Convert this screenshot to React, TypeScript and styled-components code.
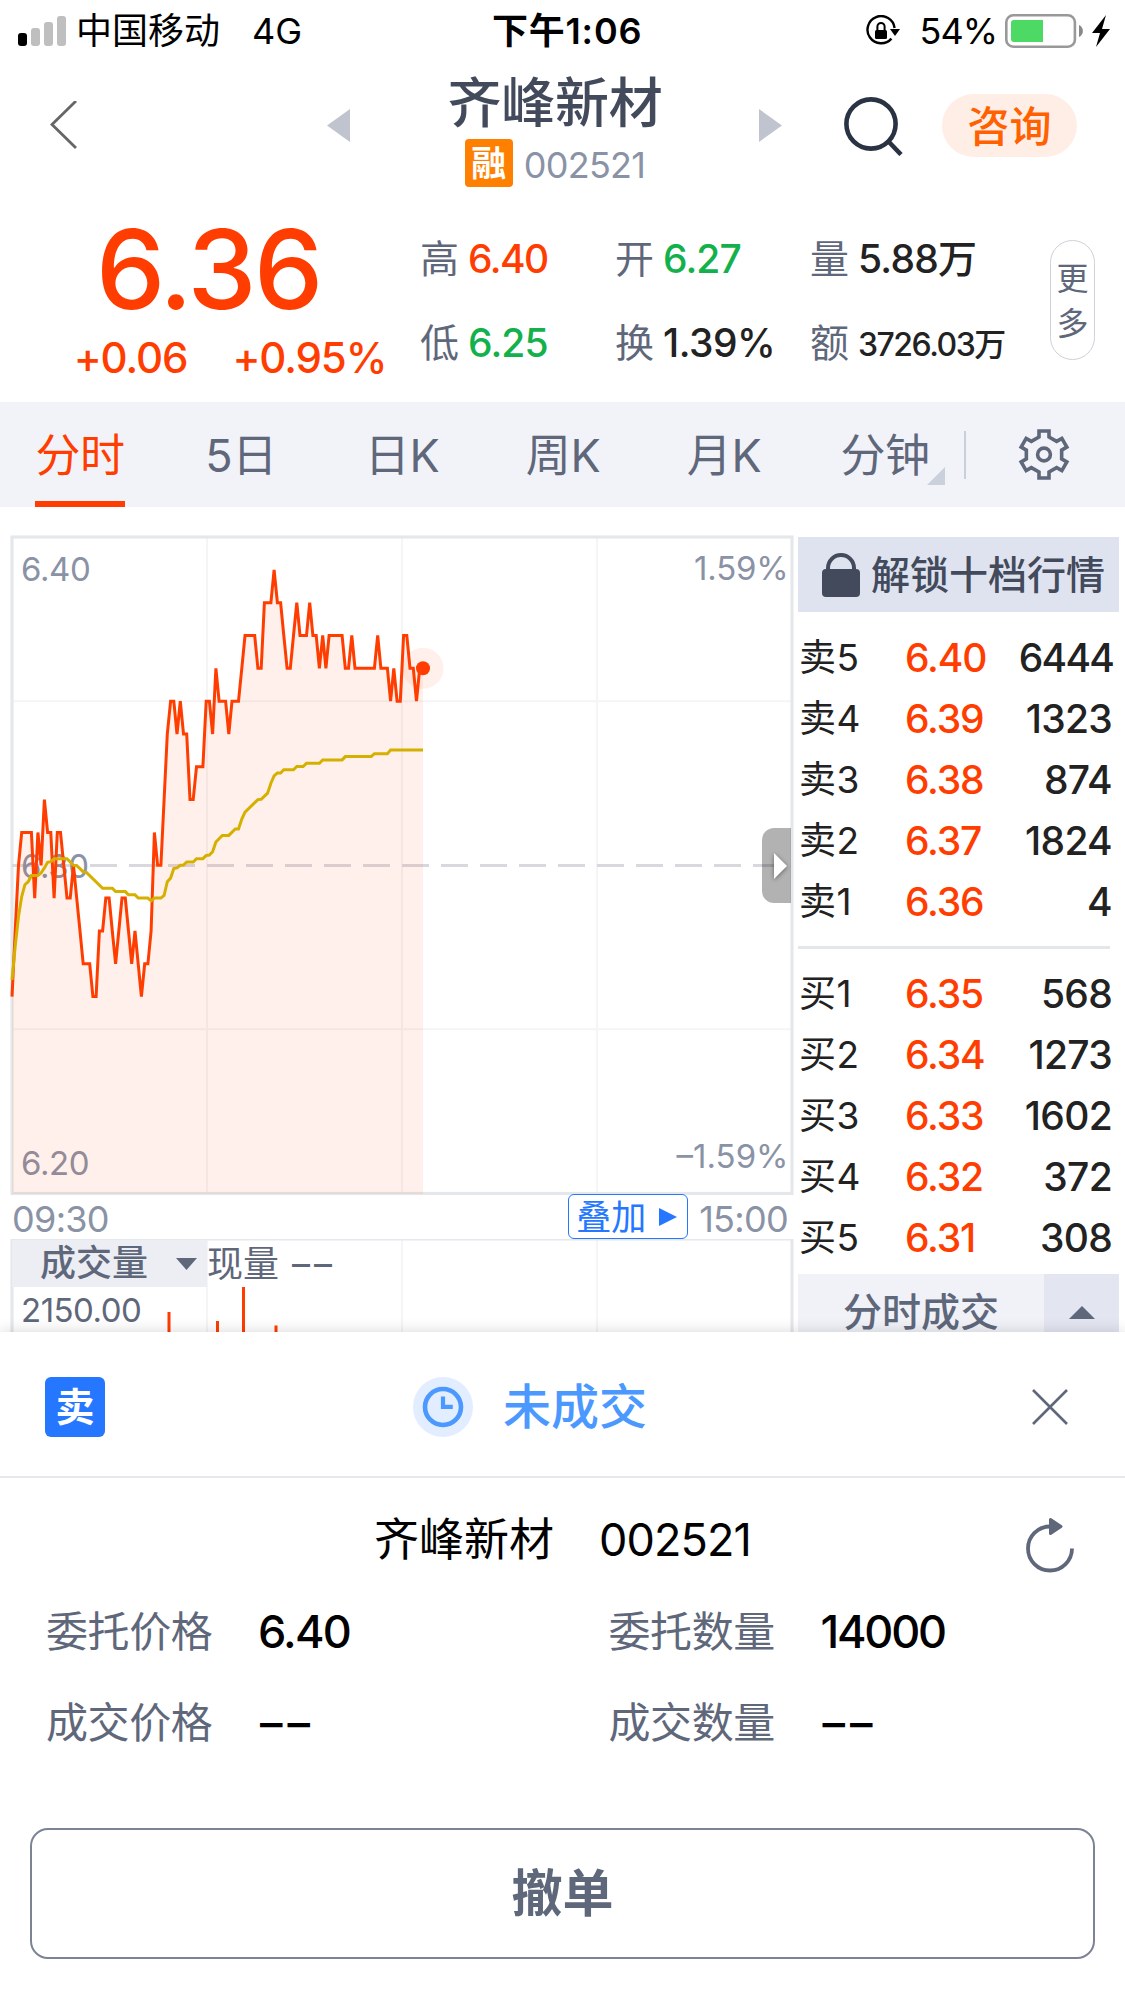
import React from 'react';
import styled, { createGlobalStyle } from 'styled-components';

const RED = '#ff3d00';
const GREEN = '#12b14c';
const SLATE = '#5f677b';
const MIST = '#8a92a5';
const INK = '#222222';

const GlobalStyle = createGlobalStyle`
  * { box-sizing: border-box; }
  body { margin: 0; background: #fff; }
`;

const Screen = styled.div`
  width: 1125px;
  height: 2001px;
  overflow: hidden;
  display: flex;
  flex-direction: column;
  background: #fff;
  font-family: Inter, "Noto Sans CJK SC", sans-serif;
  color: ${INK};
  white-space: nowrap;
`;

/* ---------- status bar ---------- */

const StatusBar = styled.header`
  height: 60px;
  padding: 2px 14px 0 18px;
  display: grid;
  grid-template-columns: 476px 1fr auto;
  align-items: center;
  font-size: 36px;
  line-height: 58px;
  color: #000;
`;

const StatusGroup = styled.div`
  display: flex;
  align-items: center;
`;

const Carrier = styled.span`
  margin-left: 10px;
`;

const Network = styled.span`
  margin-left: 32px;
`;

const Clock = styled.span`
  font-weight: 600;
  margin-left: -2px;
  letter-spacing: 0.8px;
`;

const BatteryText = styled.span`
  margin: 0 8px 0 20px;
  letter-spacing: -1px;
`;

/* ---------- navigation ---------- */

const Nav = styled.nav`
  height: 131px;
  display: flex;
  align-items: center;
  padding: 0 48px;
`;

const NavLeft = styled.div`
  width: 399px;
  display: flex;
  align-items: center;
  gap: 249px;
`;

const TitleBlock = styled.div`
  width: 216px;
  margin-top: 7px;
  display: flex;
  flex-direction: column;
  align-items: center;
`;

const StockTitle = styled.h1`
  margin: 0;
  font-size: 54px;
  line-height: 68px;
  font-weight: 500;
  letter-spacing: -0.3px;
  color: #424a5c;
`;

const CodeLine = styled.div`
  display: flex;
  align-items: center;
  gap: 11px;
  font-size: 36px;
  line-height: 48px;
  letter-spacing: -0.7px;
  color: ${MIST};
`;

const CodeText = styled.span`
  padding-top: 3px;
`;

const MarginBadge = styled.span`
  width: 48px;
  height: 48px;
  border-radius: 4px;
  background: #ff8000;
  color: #fff;
  font-size: 35px;
  font-weight: 700;
  letter-spacing: 0;
  text-align: center;
`;

const NavRight = styled.div`
  flex: 1;
  display: flex;
  align-items: center;
  padding-left: 96px;
`;

const SearchSlot = styled.span`
  display: flex;
  margin-left: 62px;
`;

const ConsultButton = styled.button`
  margin: 0 0 0 38px;
  width: 135px;
  height: 63px;
  padding: 0;
  border: 0;
  border-radius: 32px;
  background: #ffeee6;
  color: #ff6000;
  font: inherit;
  font-size: 42px;
  line-height: 65px;
  font-weight: 500;
`;

/* ---------- quote summary ---------- */

const Quote = styled.section`
  height: 211px;
  display: flex;
`;

const PriceBlock = styled.div`
  width: 420px;
  color: ${RED};
  font-weight: 500;
  display: flex;
  flex-direction: column;
  align-items: center;
`;

const LastPrice = styled.div`
  margin: 19px 3px 0 0;
  font-size: 110px;
  line-height: 119px;
  letter-spacing: -2.4px;
`;

const ChangeLine = styled.div`
  display: flex;
  gap: 45px;
  padding-left: 40px;
  font-size: 42px;
  line-height: 57px;
  letter-spacing: -1.1px;
`;

const StatsGrid = styled.div`
  flex: 1;
  padding-top: 25px;
  display: grid;
  grid-template: 84px 84px / 195px 195px 1fr;
`;

const Stat = styled.div`
  display: flex;
  align-items: center;
  gap: 8px;
  font-size: 39px;
  line-height: 85px;
  color: ${SLATE};
`;

const StatValue = styled.span<{ $tone?: string; $small?: boolean; $track?: number }>`
  font-weight: 500;
  color: ${(p) => p.$tone ?? INK};
  font-size: ${(p) => (p.$small ? 32 : 39)}px;
  letter-spacing: ${(p) => p.$track ?? -1.3}px;
  padding-top: ${(p) => (p.$small ? 5 : 0)}px;
  padding-left: 1px;
`;

const MoreButton = styled.button`
  width: 45px;
  height: 120px;
  margin: 49px 30px 0 0;
  padding: 2px 0 0;
  border: 1.5px solid #cfd1d8;
  border-radius: 23px;
  background: #fff;
  display: flex;
  flex-direction: column;
  align-items: center;
  justify-content: center;
  font: inherit;
  font-size: 32px;
  line-height: 45px;
  color: ${SLATE};
`;

/* ---------- period tabs ---------- */

const Tabs = styled.div`
  height: 105px;
  display: flex;
  background: #f2f3f8;
`;

const Tab = styled.div`
  position: relative;
  width: 161px;
  padding-right: 1px;
  display: flex;
  justify-content: center;
  font-size: 45px;
  line-height: 108px;
`;

const TabLabel = styled.span<{ $active?: boolean }>`
  height: 105px;
  letter-spacing: -0.4px;
  color: ${(p) => (p.$active ? RED : SLATE)};
  border-bottom: 6px solid ${(p) => (p.$active ? RED : 'transparent')};
`;

const TabCorner = styled.i`
  position: absolute;
  right: 21px;
  bottom: 22px;
  width: 18px;
  height: 18px;
  background: #cbd1db;
  clip-path: polygon(100% 0, 100% 100%, 0 100%);
`;

const SettingsCell = styled.div`
  flex: 1;
  display: flex;
  align-items: center;
`;

const CellDivider = styled.i`
  width: 2px;
  height: 48px;
  margin: 0 51px 0 -2px;
  background: #c9d0da;
`;

/* ---------- market area ---------- */

const Market = styled.main`
  height: 825px;
  display: flex;
  overflow: hidden;
`;

const ChartColumn = styled.div`
  width: 798px;
  padding-top: 23px;
`;

const ChartBox = styled.div`
  position: relative;
  height: 664px;
`;

const ChartSvg = styled.svg`
  display: block;
  overflow: visible;
`;

const Drawer = styled.div`
  position: absolute;
  top: 298px;
  left: 762px;
  width: 29px;
  height: 75px;
  border-radius: 12px 0 0 12px;
  background: rgba(0, 0, 0, 0.3);
  display: flex;
  align-items: center;
  justify-content: flex-end;
  padding-right: 4px;

  svg {
    overflow: visible;
    filter: drop-shadow(0 1px 2px rgba(0, 0, 0, 0.45));
  }
`;

const AxisRow = styled.div`
  position: relative;
  height: 45px;
  padding: 0 10px 0 12px;
  display: flex;
  align-items: center;
  font-size: 36px;
  line-height: 50px;
  letter-spacing: -0.7px;
  color: ${MIST};
`;

const AxisTime = styled.span`
  padding-top: 4px;
`;

const OverlayButton = styled.button`
  width: 120px;
  height: 45px;
  margin: 0 11px 0 auto;
  padding: 0 10px 0 7px;
  display: flex;
  align-items: center;
  justify-content: space-between;
  border: 1.5px solid #2577ff;
  border-radius: 6px;
  background: #fff;
  color: #2577ff;
  font: inherit;
  font-size: 35px;
  line-height: 40px;
  letter-spacing: 0;
`;

const VolumeBox = styled.div`
  position: relative;
  height: 93px;
`;

const VolumeSvg = styled.svg`
  position: absolute;
  left: 0;
  top: 0;
`;

const VolumeHead = styled.div`
  position: relative;
  display: flex;
  padding: 1px 0 0 12px;
  font-size: 36px;
  line-height: 49px;
  height: 48px;
  color: ${SLATE};
`;

const VolumePicker = styled.div`
  width: 195px;
  height: 47px;
  padding: 0 10px 0 28px;
  display: flex;
  align-items: center;
  justify-content: space-between;
  background: #edeef4;
  font-weight: 500;
`;

const Dashes = styled.span`
  letter-spacing: 4px;
  margin-left: 13px;
`;

const VolumeMax = styled.div`
  position: relative;
  padding-left: 21px;
  font-size: 33px;
  line-height: 47px;
  height: 45px;
  letter-spacing: -0.5px;
  color: ${SLATE};
`;

/* ---------- order book ---------- */

const Book = styled.aside`
  width: 321px;
  padding-top: 30px;
  display: flex;
  flex-direction: column;
`;

const UnlockBar = styled.div`
  height: 75px;
  display: flex;
  align-items: center;
  padding-left: 24px;
  gap: 11px;
  background: #dfe3ef;
  color: #424a5c;
  font-size: 39px;
  line-height: 75px;
  font-weight: 500;
`;

const Levels = styled.div`
  padding-top: 14px;
`;

const Level = styled.div`
  height: 61px;
  padding: 0 6px 0 1px;
  display: grid;
  grid-template-columns: 106px 90px 1fr;
  align-items: center;
  font-size: 39px;
  line-height: 62px;
`;

const LevelName = styled.span`
  font-size: 37px;
  line-height: 63px;
  letter-spacing: 0.4px;
`;

const LevelPrice = styled.span`
  font-weight: 500;
  letter-spacing: -1.2px;
  color: ${RED};
`;

const LevelVolume = styled.span<{ $tight?: boolean }>`
  font-weight: 500;
  letter-spacing: ${(p) => (p.$tight ? -1.8 : -0.7)}px;
  margin-right: ${(p) => (p.$tight ? 0 : 1)}px;
  text-align: right;
`;

const BookRule = styled.hr`
  width: 312px;
  height: 3px;
  margin: 15px 0 -1px;
  border: 0;
  background: #e3e7ec;
  flex-shrink: 0;
`;

const DealsBar = styled.div`
  height: 58px;
  margin-top: 7px;
  display: grid;
  grid-template-columns: 246px 75px;
  background: #f1f2f7;
  color: ${SLATE};
  font-size: 39px;
  line-height: 40px;
  font-weight: 500;
`;

const DealsLabel = styled.div`
  padding-top: 18px;
  text-align: center;
`;

const DealsToggle = styled.div`
  display: flex;
  justify-content: center;
  padding-top: 32px;
  background: #e3e5f1;
`;

/* ---------- order sheet ---------- */

const Sheet = styled.section`
  position: relative;
  height: 669px;
  background: #fff;
  box-shadow: 0 0 14px rgba(0, 0, 0, 0.16);
`;

const SheetHead = styled.div`
  height: 146px;
  padding: 6px 57px 0 45px;
  display: flex;
  align-items: center;
  border-bottom: 2px solid #e5e8ec;
`;

const SideBadge = styled.span`
  width: 60px;
  height: 60px;
  border-radius: 6px;
  background: #2577ff;
  color: #fff;
  font-size: 39px;
  line-height: 59px;
  font-weight: 700;
  text-align: center;
`;

const OrderState = styled.div`
  margin: 0 auto 0 308px;
  display: flex;
  align-items: center;
  gap: 30px;
  color: #4b98ff;
  font-size: 48px;
  line-height: 62px;
  font-weight: 500;
`;

const SheetTitle = styled.div`
  height: 108px;
  padding: 14px 51px 0;
  display: grid;
  grid-template-columns: 1fr auto 1fr;
  align-items: start;
  color: #000;
  font-size: 45px;
  line-height: 96px;
`;

const TitlePair = styled.div`
  display: flex;
  gap: 45px;
`;

const SheetCode = styled.span`
  letter-spacing: -0.9px;
`;

const RefreshSlot = styled.div`
  justify-self: end;
  padding-top: 25px;
  line-height: 0;
`;

const Fields = styled.div`
  display: grid;
  grid-template-columns: 1fr 1fr;
  grid-auto-rows: 91px;
`;

const Field = styled.div`
  display: flex;
  align-items: center;
  padding-left: 46px;
  font-size: 42px;
  line-height: 92px;
  color: ${SLATE};
`;

const FieldName = styled.span`
  width: 168px;
  letter-spacing: -0.4px;
`;

const FieldValue = styled.span<{ $track?: number; $indent?: number }>`
  margin-left: ${(p) => p.$indent ?? 44}px;
  font-size: 45px;
  font-weight: 500;
  letter-spacing: ${(p) => p.$track ?? -1.8}px;
  color: #000;
`;

const CancelButton = styled.button`
  display: block;
  width: 1065px;
  height: 131px;
  margin: 60px 30px 0;
  padding: 0;
  border: 2px solid #7c8395;
  border-radius: 18px;
  background: #fff;
  color: ${SLATE};
  font: inherit;
  font-size: 51px;
  line-height: 127px;
  font-weight: 700;
`;

/* ---------- icons ---------- */

const SignalIcon = () => (
  <svg width="48" height="30" viewBox="0 0 48 30">
    <rect x="0" y="17" width="9" height="13" rx="3" fill="#000" />
    <rect x="13" y="12" width="9" height="18" rx="3" fill="#bfbfbf" />
    <rect x="26" y="6" width="9" height="24" rx="3" fill="#bfbfbf" />
    <rect x="39" y="0" width="9" height="30" rx="3" fill="#bfbfbf" />
  </svg>
);

const RotationLockIcon = () => (
  <svg width="34" height="32" viewBox="0 0 34 32">
    <path d="M25.4 23.6 A13.6 13.6 0 1 1 28.6 13" fill="none" stroke="#000" strokeWidth="2.4" />
    <path d="M24 14h10l-5 7z" />
    <rect x="9" y="15" width="12" height="9" rx="1.5" />
    <path d="M11.4 16v-4.5a3.6 3.6 0 0 1 7.2 0V16" fill="none" stroke="#000" strokeWidth="2" />
  </svg>
);

const BatteryIcon = () => (
  <svg width="106" height="34" viewBox="0 0 106 34">
    <rect x="1.3" y="1.3" width="68.6" height="31.4" rx="7" fill="none" stroke="#999" strokeWidth="2.6" />
    <path d="M9 6h29v22H9a3 3 0 0 1-3-3V9a3 3 0 0 1 3-3z" fill="#4cd964" />
    <path d="M74 11a6.6 6.6 0 0 1 0 12z" fill="#888" />
    <path d="M101 1 87 19h8l-4 14 14-18h-8z" fill="#000" />
  </svg>
);

const BackIcon = () => (
  <svg width="30" height="50" viewBox="0 0 30 50">
    <path d="M28 0 4 23.5 28 47" fill="none" stroke="#666" strokeWidth="2.8" />
  </svg>
);

const Triangle = ({ w, h, dir, color }: { w: number; h: number; dir: 'l' | 'r' | 'u' | 'd'; color: string }) => {
  const points = {
    l: `${w},0 ${w},${h} 0,${h / 2}`,
    r: `0,0 ${w},${h / 2} 0,${h}`,
    u: `0,${h} ${w / 2},0 ${w},${h}`,
    d: `0,0 ${w},0 ${w / 2},${h}`,
  }[dir];
  return (
    <svg width={w} height={h} viewBox={`0 0 ${w} ${h}`}>
      <polygon points={points} fill={color} />
    </svg>
  );
};

const SearchIcon = () => (
  <svg width="60" height="60" viewBox="0 0 60 60">
    <circle cx="27" cy="28" r="24.6" fill="none" stroke="#2a3344" strokeWidth="4.6" />
    <path d="m44 45 13 13.5" stroke="#2a3344" strokeWidth="4.6" />
  </svg>
);

const gearOutline = Array.from({ length: 6 }, (_, k) => {
  const a = (k * Math.PI) / 3;
  return [[-5, -17.5], [-5, -23.5], [5, -23.5], [5, -17.5]]
    .map(([x, y]) => `${(27 + x * Math.cos(a) - y * Math.sin(a)).toFixed(2)},${(26.5 + x * Math.sin(a) + y * Math.cos(a)).toFixed(2)}`)
    .join(' ');
}).join(' ');

const GearIcon = () => (
  <svg width="54" height="54" viewBox="0 0 54 54" fill="none" stroke={SLATE} strokeWidth="3.6">
    <polygon points={gearOutline} />
    <circle cx="27" cy="26.5" r="6.4" />
  </svg>
);

const LockIcon = () => (
  <svg width="38" height="46" viewBox="0 0 38 46">
    <rect x="0" y="17" width="38" height="28" rx="4" fill="#424a5c" />
    <path d="M6 19v-3a13 13 0 0 1 26 0v3" fill="none" stroke="#424a5c" strokeWidth="4" />
  </svg>
);

const PendingIcon = () => (
  <svg width="60" height="60" viewBox="0 0 60 60">
    <circle cx="30" cy="30" r="30" fill="#e2eeff" />
    <circle cx="30" cy="30" r="18" fill="none" stroke="#4b98ff" strokeWidth="4.6" />
    <path d="M30 19.5v10.4h9.8" fill="none" stroke="#4b98ff" strokeWidth="4.2" />
  </svg>
);

const CloseIcon = () => (
  <svg width="36" height="36" viewBox="0 0 36 36">
    <path d="m1 1 34 34M35 1 1 35" stroke={SLATE} strokeWidth="2.6" />
  </svg>
);

const RefreshIcon = () => (
  <svg width="48" height="56" viewBox="0 0 48 56">
    <path d="M46 31.5A22 22 0 1 1 24 9.5" fill="none" stroke={SLATE} strokeWidth="3.8" />
    <path d="M24.5 2.5v14L35 9.5z" fill={SLATE} stroke={SLATE} strokeWidth="3" strokeLinejoin="round" />
  </svg>
);

/* ---------- chart data ---------- */

/* minute-by-minute price, in cents above the 6.30 reference price */
const price = [
  -4, -2, 0, 1, 1, 1, 1, -1, 1, 0, 2, 1, 1, -1, 1, 1, 0, -1, -1, 0, -1, -2, -3, -3, -3, -4, -4, -2, -2, -1, -1, -2,
  -3, -2, -1, -1, -2, -3, -2, -3, -4, -3, -3, -2, 1, 0, 0, 2, 4, 5, 5, 4, 5, 4, 4, 2, 2, 3, 3, 3, 5, 5, 4, 6, 5, 5,
  5, 4, 5, 5, 5, 6, 7, 7, 7, 7, 6, 6, 8, 8, 8, 9, 8, 8, 7, 6, 6, 7, 8, 7, 7, 7, 8, 7, 7, 6, 7, 6, 7, 7, 7, 7, 7, 6,
  6, 7, 6, 6, 6, 6, 6, 6, 6, 7, 6, 6, 6, 5, 6, 5, 5, 7, 7, 6, 6, 5, 6, 6,
];

/* running average, as minute / level pairs on the same scale */
const average: [number, number][] = [
  [0, -3.49], [1, -2.47], [2, -1.56], [3, -0.95], [4, -0.59], [5, -0.5], [6, -0.31], [8, -0.31], [9, -0.23],
  [10, -0.08], [11, 0.09], [12, 0.11], [13, 0.2], [17, 0.2], [18, 0.1], [19, 0], [20, -0.01], [21, -0.1],
  [22, -0.2], [23, -0.22], [28, -0.7], [31, -0.7], [32, -0.8], [35, -0.8], [36, -0.9], [38, -0.9], [39, -1],
  [42, -1], [43, -1.08], [44, -1], [46, -1], [47, -0.92], [48, -0.5], [49, -0.39], [50, -0.1], [51, -0.08],
  [52, 0], [53, 0.01], [54, 0.1], [56, 0.1], [57, 0.2], [59, 0.2], [60, 0.3], [61, 0.31], [62, 0.41],
  [63, 0.71], [65, 0.91], [67, 0.91], [69, 1.11], [70, 1.11], [71, 1.41], [72, 1.62], [76, 2], [77, 2.01],
  [79, 2.2], [80, 2.5], [81, 2.72], [82, 2.81], [83, 2.81], [84, 2.91], [87, 2.91], [88, 3.01], [90, 3.01],
  [91, 3.11], [95, 3.11], [96, 3.21], [102, 3.21], [103, 3.31], [111, 3.31], [112, 3.4], [116, 3.4],
  [117, 3.51], [127, 3.51],
];

const px = (m: number) => (12 + m * 3.236).toFixed(1);
const py = (level: number) => (335.3 - level * 32.83).toFixed(1);
const pricePoints = price.map((v, m) => `${px(m)},${py(v)}`).join(' ');
const averagePoints = average.map(([m, v]) => `${px(m)},${py(v)}`).join(' ');

const MinuteChart = () => (
  <ChartSvg width="798" height="664" viewBox="0 0 798 664">
    <g stroke="#f5f5f7" strokeWidth="2">
      <path d="M207 8v655M402 8v655M597 8v655M12 171.3h780M12 499.3h780" />
    </g>
    <rect x="12" y="7" width="780" height="656.5" fill="none" stroke="#e4e8ec" strokeWidth="3.2" />
    <path d="M12 335.5h780" stroke="#d9d8df" strokeWidth="3" strokeDasharray="27 12" />
    <g fontSize="33" fill={MIST} letterSpacing="-0.4">
      <text x="21" y="51">6.40</text>
      <text x="21" y="348">6.30</text>
      <text x="21" y="645">6.20</text>
      <text x="788.5" y="50" textAnchor="end" letterSpacing="-0.2">1.59%</text>
      <text x="788.5" y="638" textAnchor="end" letterSpacing="0">–1.59%</text>
    </g>
    <polygon points={`12,664 ${pricePoints} 423,664`} fill={RED} fillOpacity="0.08" />
    <polyline points={pricePoints} fill="none" stroke={RED} strokeWidth="3" />
    <polyline points={averagePoints} fill="none" stroke="#d6b000" strokeWidth="3" />
    <circle cx="423" cy="138.3" r="20.5" fill={RED} fillOpacity="0.08" />
    <circle cx="423" cy="138.3" r="7" fill={RED} />
  </ChartSvg>
);

/* ---------- page data ---------- */

const stats = [
  { label: '高', value: '6.40', tone: RED, track: -1.6 },
  { label: '开', value: '6.27', tone: GREEN, track: -0.9 },
  { label: '量', value: '5.88万', track: -0.8 },
  { label: '低', value: '6.25', tone: GREEN, track: -0.9 },
  { label: '换', value: '1.39%', track: -0.5 },
  { label: '额', value: '3726.03万', small: true, track: -1.5 },
];

const tabs = ['分时', '5日', '日K', '周K', '月K', '分钟'];

const sells = [
  ['卖5', '6.40', '6444'],
  ['卖4', '6.39', '1323'],
  ['卖3', '6.38', '874'],
  ['卖2', '6.37', '1824'],
  ['卖1', '6.36', '4'],
];

const buys = [
  ['买1', '6.35', '568'],
  ['买2', '6.34', '1273'],
  ['买3', '6.33', '1602'],
  ['买4', '6.32', '372'],
  ['买5', '6.31', '308'],
];

const LevelList = ({ rows }: { rows: string[][] }) => (
  <Levels>
    {rows.map(([name, value, volume]) => (
      <Level key={name}>
        <LevelName>{name}</LevelName>
        <LevelPrice>{value}</LevelPrice>
        <LevelVolume $tight={volume.endsWith('444')}>{volume}</LevelVolume>
      </Level>
    ))}
  </Levels>
);

export default function App() {
  return (
    <>
      <GlobalStyle />
      <Screen>
        <StatusBar>
          <StatusGroup>
            <SignalIcon />
            <Carrier>中国移动</Carrier>
            <Network>4G</Network>
          </StatusGroup>
          <Clock>下午1:06</Clock>
          <StatusGroup>
            <RotationLockIcon />
            <BatteryText>54%</BatteryText>
            <BatteryIcon />
          </StatusGroup>
        </StatusBar>

        <Nav>
          <NavLeft>
            <BackIcon />
            <Triangle w={23} h={33} dir="l" color="#c0c4ce" />
          </NavLeft>
          <TitleBlock>
            <StockTitle>齐峰新材</StockTitle>
            <CodeLine>
              <MarginBadge>融</MarginBadge>
              <CodeText>002521</CodeText>
            </CodeLine>
          </TitleBlock>
          <NavRight>
            <Triangle w={23} h={33} dir="r" color="#c0c4ce" />
            <SearchSlot>
              <SearchIcon />
            </SearchSlot>
            <ConsultButton>咨询</ConsultButton>
          </NavRight>
        </Nav>

        <Quote>
          <PriceBlock>
            <LastPrice>6.36</LastPrice>
            <ChangeLine>
              <span>+0.06</span>
              <span>+0.95%</span>
            </ChangeLine>
          </PriceBlock>
          <StatsGrid>
            {stats.map((s) => (
              <Stat key={s.label}>
                {s.label}
                <StatValue $tone={s.tone} $small={s.small} $track={s.track}>
                  {s.value}
                </StatValue>
              </Stat>
            ))}
          </StatsGrid>
          <MoreButton>
            <span>更</span>
            <span>多</span>
          </MoreButton>
        </Quote>

        <Tabs>
          {tabs.map((t, i) => (
            <Tab key={t}>
              <TabLabel $active={i === 0}>{t}</TabLabel>
              {t === '分钟' && <TabCorner />}
            </Tab>
          ))}
          <SettingsCell>
            <CellDivider />
            <GearIcon />
          </SettingsCell>
        </Tabs>

        <Market>
          <ChartColumn>
            <ChartBox>
              <MinuteChart />
              <Drawer>
                <Triangle w={13} h={26} dir="r" color="#fff" />
              </Drawer>
            </ChartBox>
            <AxisRow>
              <AxisTime>09:30</AxisTime>
              <OverlayButton>
                叠加
                <Triangle w={18} h={18} dir="r" color="#2577ff" />
              </OverlayButton>
              <AxisTime>15:00</AxisTime>
            </AxisRow>
            <VolumeBox>
              <VolumeSvg width="798" height="93" viewBox="0 0 798 93">
                <path d="M207 0v93M402 0v93M597 0v93" stroke="#f5f5f7" strokeWidth="2" />
                <path d="M12 93V0h780v93" fill="none" stroke="#e4e8ec" strokeWidth="3.2" />
                <path d="M169 73v20M217.5 82v11M243.5 48v45M276 86.5v7" stroke={RED} strokeWidth="3" />
              </VolumeSvg>
              <VolumeHead>
                <VolumePicker>
                  成交量
                  <Triangle w={21} h={12} dir="d" color={SLATE} />
                </VolumePicker>
                <span>现量</span>
                <Dashes>––</Dashes>
              </VolumeHead>
              <VolumeMax>2150.00</VolumeMax>
            </VolumeBox>
          </ChartColumn>

          <Book>
            <UnlockBar>
              <LockIcon />
              解锁十档行情
            </UnlockBar>
            <LevelList rows={sells} />
            <BookRule />
            <LevelList rows={buys} />
            <DealsBar>
              <DealsLabel>分时成交</DealsLabel>
              <DealsToggle>
                <Triangle w={26} h={13} dir="u" color={SLATE} />
              </DealsToggle>
            </DealsBar>
          </Book>
        </Market>

        <Sheet>
          <SheetHead>
            <SideBadge>卖</SideBadge>
            <OrderState>
              <PendingIcon />
              未成交
            </OrderState>
            <CloseIcon />
          </SheetHead>
          <SheetTitle>
            <span />
            <TitlePair>
              <span>齐峰新材</span>
              <SheetCode>002521</SheetCode>
            </TitlePair>
            <RefreshSlot>
              <RefreshIcon />
            </RefreshSlot>
          </SheetTitle>
          <Fields>
            <Field>
              <FieldName>委托价格</FieldName>
              <FieldValue>6.40</FieldValue>
            </Field>
            <Field>
              <FieldName>委托数量</FieldName>
              <FieldValue $track={-2.2}>14000</FieldValue>
            </Field>
            <Field>
              <FieldName>成交价格</FieldName>
              <FieldValue $track={5} $indent={46}>––</FieldValue>
            </Field>
            <Field>
              <FieldName>成交数量</FieldName>
              <FieldValue $track={5} $indent={46}>––</FieldValue>
            </Field>
          </Fields>
          <CancelButton>撤单</CancelButton>
        </Sheet>
      </Screen>
    </>
  );
}
